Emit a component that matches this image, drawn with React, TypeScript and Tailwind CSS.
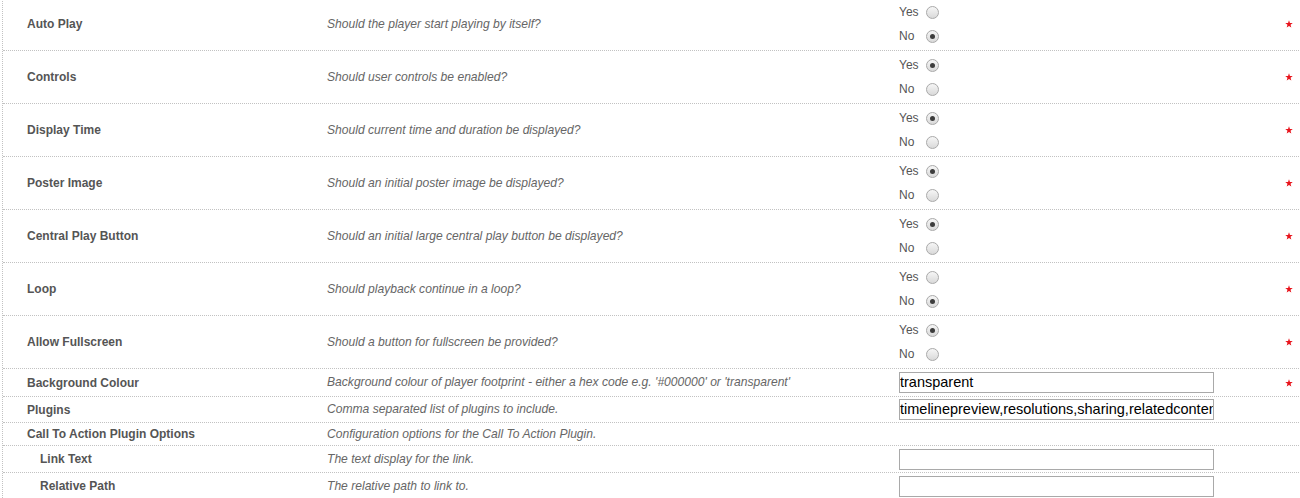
import React from "react";

type RadioRow = { label: string; desc: string; yes: boolean };

const radioRows: RadioRow[] = [
  { label: "Auto Play", desc: "Should the player start playing by itself?", yes: false },
  { label: "Controls", desc: "Should user controls be enabled?", yes: true },
  { label: "Display Time", desc: "Should current time and duration be displayed?", yes: true },
  { label: "Poster Image", desc: "Should an initial poster image be displayed?", yes: true },
  { label: "Central Play Button", desc: "Should an initial large central play button be displayed?", yes: true },
  { label: "Loop", desc: "Should playback continue in a loop?", yes: false },
  { label: "Allow Fullscreen", desc: "Should a button for fullscreen be provided?", yes: true },
];

function Radio({ checked }: { checked: boolean }) {
  return (
    <span className="inline-flex w-[13px] h-[13px] rounded-full border border-[#a9a9a9] bg-linear-to-b from-[#f6f6f6] to-[#d9d9d9] items-center justify-center">
      {checked && <span className="w-[5px] h-[5px] rounded-full bg-[#3c3c3c]" />}
    </span>
  );
}

function Star() {
  return (
    <svg width="8" height="8" viewBox="0 0 10 10" className="block">
      <polygon
        points="5,0.3 6.2,3.6 9.7,3.7 6.9,5.9 7.9,9.4 5,7.4 2.1,9.4 3.1,5.9 0.3,3.7 3.8,3.6"
        fill="#e8141c"
      />
    </svg>
  );
}

const rowBase =
  "grid grid-cols-[324px_572px_1fr_14px] items-center border-b border-dotted border-[#c2c2c2]";

const inputCls =
  "w-[315px] h-[21px] border border-[#a9a9a9] px-0 text-[14.5px] text-black bg-white outline-none font-['Liberation_Sans',Arial,sans-serif]";

const descCls = "italic text-[#666666] text-[12.1px]";

export default function App() {
  return (
    <div className="w-[1300px] h-[498px] overflow-hidden bg-white font-['Liberation_Sans',Arial,sans-serif] text-[12px]">
      <div className="-mt-[2px] ml-[2px] mr-[1px] border-l border-dotted border-[#c2c2c2]">
        {radioRows.map((r) => (
          <div key={r.label} className={`${rowBase} h-[53px]`}>
            <div className="pl-[24px] font-bold text-[#555555]">{r.label}</div>
            <div className={descCls}>{r.desc}</div>
            <div className="self-start pt-[2px] flex flex-col text-[#555555]">
              <label className="h-[24px] flex items-center">
                <span className="w-[27px]">Yes</span>
                <Radio checked={r.yes} />
              </label>
              <label className="h-[24px] flex items-center">
                <span className="w-[27px]">No</span>
                <Radio checked={!r.yes} />
              </label>
            </div>
            <div>
              <Star />
            </div>
          </div>
        ))}

        <div className={`${rowBase} h-[28px]`}>
          <div className="pl-[24px] font-bold text-[#555555]">Background Colour</div>
          <div className={descCls}>
            Background colour of player footprint - either a hex code e.g. '#000000' or 'transparent'
          </div>
          <div className="flex">
            <input readOnly value="transparent" className={inputCls} />
          </div>
          <div>
            <Star />
          </div>
        </div>

        <div className={`${rowBase} h-[26px]`}>
          <div className="pl-[24px] font-bold text-[#555555]">Plugins</div>
          <div className={descCls}>Comma separated list of plugins to include.</div>
          <div className="flex">
            <input
              readOnly
              value="timelinepreview,resolutions,sharing,relatedcontent,calltoaction"
              className={inputCls}
            />
          </div>
          <div />
        </div>

        <div className={`${rowBase} h-[23px]`}>
          <div className="pl-[24px] font-bold text-[#555555]">Call To Action Plugin Options</div>
          <div className={descCls}>Configuration options for the Call To Action Plugin.</div>
          <div />
          <div />
        </div>

        <div className={`${rowBase} h-[27px]`}>
          <div className="pl-[37px] font-bold text-[#555555]">Link Text</div>
          <div className={descCls}>The text display for the link.</div>
          <div className="flex">
            <input readOnly value="" className={inputCls} />
          </div>
          <div />
        </div>

        <div className={`${rowBase} h-[27px]`}>
          <div className="pl-[37px] font-bold text-[#555555]">Relative Path</div>
          <div className={descCls}>The relative path to link to.</div>
          <div className="flex">
            <input readOnly value="" className={inputCls} />
          </div>
          <div />
        </div>
      </div>
    </div>
  );
}
